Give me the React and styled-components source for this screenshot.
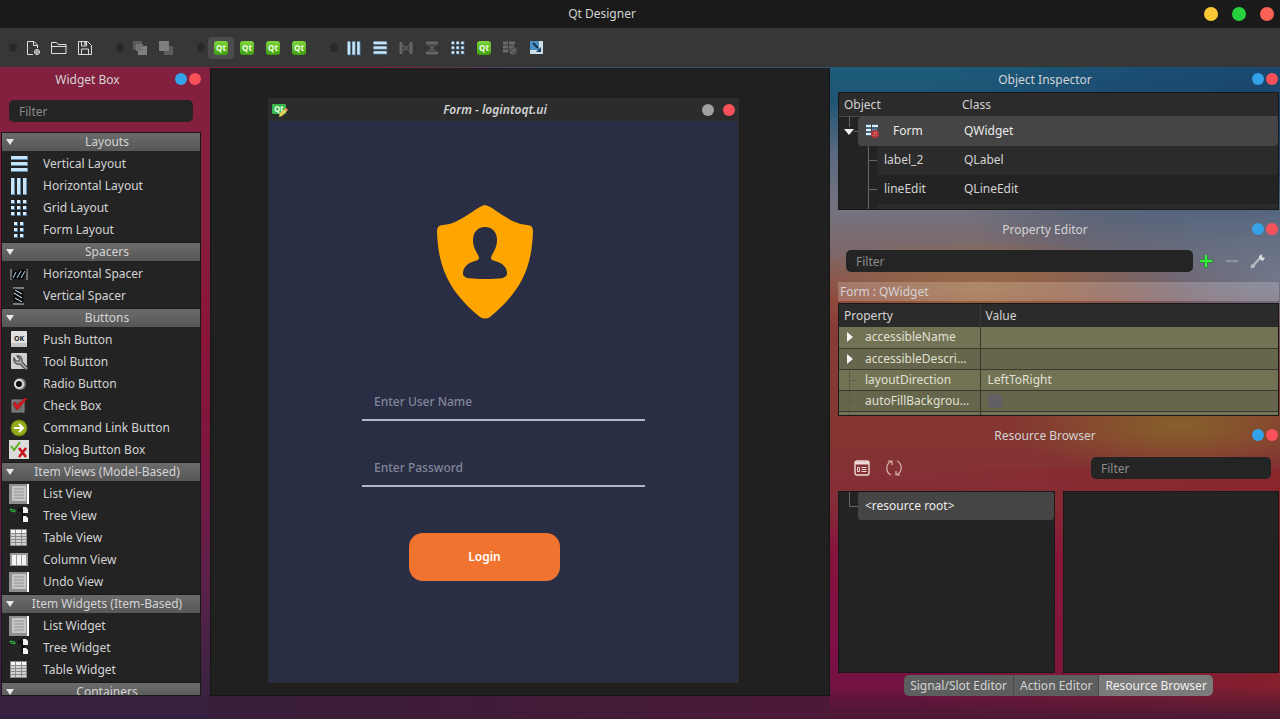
import { useState } from "react";
import styled, { createGlobalStyle, css } from "styled-components";

const theme = {
  text: "#d3d3d3",
  dim: "#8b8b8b",
  base: "#232323",
  alt: "#2b2b2b",
  selected: "#454545",
  blue: "#33a2e8",
  red: "#f9515a",
};

const GlobalStyle = createGlobalStyle`
  * {
    box-sizing: border-box;
  }

  body {
    margin: 0;
    font-family: "Noto Sans", sans-serif;
    font-size: 12px;
    line-height: 18px;
    color: ${theme.text};
    background-color: #3a1d38;
  }

  button,
  input {
    font: inherit;
    color: inherit;
    border: 0;
    margin: 0;
    padding: 0;
    background: none;
  }

  h1, h2, h3, ul {
    margin: 0;
    padding: 0;
    font-size: inherit;
    font-weight: 400;
    list-style: none;
  }

  svg {
    display: block;
    flex: none;
  }
`;

const Screen = styled.div`
  display: flex;
  flex-direction: column;
  height: 100vh;
  overflow: hidden;
`;

const TitleBar = styled.header`
  display: flex;
  align-items: center;
  height: 28px;
  flex: none;
  padding-right: 6px;
  background-color: #1a1a1a;
`;

const Title = styled.h1`
  flex: 1;
  text-align: center;
`;

const Dots = styled.div`
  display: flex;
  flex: none;
  gap: ${(props) => props.$gap}px;
`;

const Dot = styled.button`
  width: ${(props) => props.$size}px;
  height: ${(props) => props.$size}px;
  border-radius: 50%;
  background-color: ${(props) => props.$color};
`;

const ToolBar = styled.nav`
  display: flex;
  align-items: center;
  height: 39px;
  flex: none;
  background-color: #373737;
`;

const ToolGroup = styled.div`
  display: flex;
  align-items: center;
  padding-left: 18px;

  &:first-child {
    padding-left: 9px;
  }
`;

const Handle = styled.span`
  width: 8px;
  height: 9px;
  margin-right: 3px;
  border-radius: 50%;
  background-color: #292929;
`;

const ToolButton = styled.button`
  display: grid;
  place-items: center;
  width: 26px;
  height: 22px;
  border-radius: 4px;
  background-color: ${(props) => (props.$active ? "#4c4c4c" : "transparent")};
`;

const QtBadge = styled.span`
  display: grid;
  place-items: center;
  width: 14px;
  height: 14px;
  border-radius: 3px;
  font-size: 8px;
  line-height: 12px;
  font-weight: 700;
  color: #f1ffe4;
  background: linear-gradient(#7fd63c, #3f9d10);
`;

const Workspace = styled.div`
  flex: 1;
  min-height: 0;
  display: grid;
  grid-template-columns: 210px 1fr 450px;
  background:
    linear-gradient(90deg, #84203f 30%, #2a5673 45%, #1e5574) 0 0 / 100% 2px no-repeat,
    linear-gradient(90deg, #35213f, #3b1d38 25%, #4a1a38 60%, #5b1533);
`;

const LeftDock = styled.aside`
  display: flex;
  flex-direction: column;
  min-height: 0;
  padding-bottom: 23px;
  background: linear-gradient(
    #84203f,
    #84203d 20%,
    #8a1538 42%,
    #7a1842 62%,
    #55224a 82%,
    #3c2342 94%,
    #34203e
  );
`;

const RightDocks = styled.aside`
  display: flex;
  flex-direction: column;
  min-height: 0;
  padding: 0 1px 23px 8px;
  background:
    radial-gradient(170px 50px at 350px 358px, #86612a, rgba(134, 97, 42, 0)),
    radial-gradient(210px 50px at 150px 222px, rgba(158, 112, 66, 0.9), rgba(158, 112, 66, 0)),
    radial-gradient(250px 110px at 100% 210px, rgba(112, 124, 144, 0.9), rgba(112, 124, 144, 0)),
    radial-gradient(360px 200px at 100% 60px, rgba(26, 64, 108, 0.9), rgba(26, 64, 108, 0)),
    linear-gradient(0deg, #4c1834, rgba(76, 24, 52, 0)) 0 100% / 100% 34px no-repeat,
    linear-gradient(90deg, rgba(138, 36, 40, 0) 20%, rgba(138, 36, 40, 0.8)) 0 100% / 100% 250px no-repeat,
    linear-gradient(
      #1c5c7a,
      #1e5574 5%,
      #5a6880 13%,
      #75747f 22%,
      #7d6668 29%,
      #8a3d38 36%,
      #843532 58%,
      #852c38 67%,
      #86123e 75%,
      #7c1046 90%,
      #6d143f
    );
`;

const Dock = styled.section`
  display: flex;
  flex-direction: column;
  flex: ${(props) => (props.$height ? `0 0 ${props.$height}px` : "1 1 0")};
  min-height: 0;
  padding-bottom: ${(props) => (props.$height ? "7px" : "0")};
`;

const DockTitle = styled.div`
  display: flex;
  align-items: center;
  height: 25px;
  flex: none;
  padding: 0 ${(props) => (props.$inset ? "9px" : "1px")} 2px 0;

  h2 {
    flex: 1;
    padding-top: 2px;
    text-align: center;
  }
`;

const FilterInput = styled.input`
  flex: 1;
  min-width: 0;
  height: 22px;
  padding: 0 10px;
  border-radius: 5px;
  background-color: #242424;

  &::placeholder {
    color: ${theme.dim};
    opacity: 1;
  }
`;

const FilterRow = styled.div`
  display: flex;
  flex: none;
  padding: 8px 17px 10px 9px;
`;

const WidgetTree = styled.div`
  flex: 1;
  min-height: 0;
  overflow: hidden;
  margin: 0 9px 0 1px;
  border: 1px solid #191919;
  border-width: 0 1px 1px;
  background-color: ${theme.base};
`;

const CategoryHeader = styled.button`
  display: flex;
  align-items: center;
  width: 100%;
  height: 19px;
  padding-left: 4px;
  border-top: 1px solid #191919;
  background: linear-gradient(#6b6b6b, #575757);

  span {
    flex: 1;
    text-align: center;
  }
`;

const CategoryList = styled.ul`
  padding: 2px 0 1px;
`;

const WidgetItem = styled.li`
  display: flex;
  align-items: center;
  gap: 14px;
  height: 22px;
  padding-left: 7px;
`;

const Canvas = styled.main`
  min-width: 0;
  min-height: 0;
  margin: 1px 0 23px;
  padding: 30px 57px 0;
  background-color: #202020;
  border: 1px solid #151515;
  border-width: 0 1px 1px;
`;

const FormWindow = styled.section`
  width: 471px;
  border: 1px solid #2d2d2d;
  background-color: #292e45;
`;

const FormTitleBar = styled.div`
  display: flex;
  align-items: center;
  height: 22px;
  padding: 0 3px 0 2px;
  background-color: #2c2c2c;

  h2 {
    flex: 1;
    text-align: center;
    font-style: italic;
    font-weight: 600;
  }
`;

const LoginForm = styled.form`
  display: flex;
  flex-direction: column;
  height: 561px;
  padding: 84px 93px 0;
  background-image: radial-gradient(#262b41 1px, transparent 1px);
  background-size: 10px 10px;
`;

/* The logo and the button share a centre line left of the fields. */
const Centered = styled.div`
  display: flex;
  justify-content: center;
  padding-right: 38px;
`;

const LoginInput = styled.input`
  height: 38px;
  margin-top: ${(props) => props.$top}px;
  padding: 0 12px;
  border-bottom: 2px solid #b3b6c4;
  font-weight: 500;

  &::placeholder {
    color: #82859a;
    opacity: 1;
  }
`;

const LoginButton = styled.button`
  width: 151px;
  height: 48px;
  margin-top: 46px;
  border-radius: 14px;
  background-color: #f07430;
  color: #fff;
  font-weight: 600;
`;

const TableFrame = styled.div`
  flex: 1;
  min-height: 0;
  overflow: hidden;
  border: 1px solid #191919;
  background-color: ${theme.base};
`;

const headCell = css`
  height: 23px;
  padding: 1px 4px 0 5px;
  text-align: left;
  font-weight: 400;
  background-color: ${theme.alt};
`;

const ObjectTable = styled.table`
  width: 100%;
  table-layout: fixed;
  border-collapse: collapse;

  th {
    ${headCell}
    border-bottom: 1px solid #4a4a4a;
  }

  th:first-child {
    width: 118px;
  }

  td {
    height: 29px;
    padding: 0 7px;
  }

  td:first-child {
    padding: 0;
  }
`;

const ObjectRow = styled.tr`
  height: 29px;
  color: ${(props) => (props.$selected ? "#ececec" : "inherit")};

  td:last-child,
  td:first-child > div > span {
    background-color: ${(props) =>
      props.$selected ? theme.selected : props.$alt ? theme.alt : "transparent"};
  }

  td:last-child {
    border-radius: ${(props) => (props.$selected ? "0 4px 4px 0" : "0")};
  }
`;

const TreeCell = styled.div`
  display: flex;
  height: 29px;
`;

const TreeLabel = styled.span`
  flex: 1;
  display: flex;
  align-items: center;
  gap: ${(props) => (props.$selected ? "13px" : "0")};
  padding-left: 7px;
  border-radius: ${(props) => (props.$selected ? "4px 0 0 4px" : "0")};
`;

const EditorTools = styled.div`
  display: flex;
  align-items: center;
  padding: 8px 8px 10px;
`;

const FormLabel = styled.p`
  margin: 0 0 2px;
  height: 19px;
  padding: 1px 2px 0;
  background-color: rgba(255, 255, 255, 0.2);
`;

const PropertyTable = styled.table`
  width: 100%;
  table-layout: fixed;
  border-collapse: collapse;

  th {
    ${headCell}
  }

  th:first-child {
    width: 141px;
    border-right: 1px solid #3a3a3a;
  }

  td {
    height: 21px;
    padding: 0 7px;
    border-bottom: 1px solid #3a3a2c;
  }

  td:first-child {
    padding: 0;
    border-right: 1px solid #3a3a2c;
  }
`;

const PropertyRow = styled.tr`
  color: #e0e0d4;
  background-color: ${(props) => (props.$odd ? "#65664b" : "#727355")};
`;

const PropertyName = styled.div`
  display: flex;
  align-items: center;
  height: 20px;

  span {
    padding-right: 6px;
    overflow: hidden;
    text-overflow: ellipsis;
    white-space: nowrap;
  }
`;

const CheckBox = styled.input`
  appearance: none;
  display: block;
  width: 14px;
  height: 14px;
  border-radius: 2px;
  background-color: #626064;
`;

const ResourceTools = styled.div`
  display: flex;
  align-items: center;
  justify-content: space-between;
  padding: 9px 8px 12px;
`;

const ResourceButtons = styled.div`
  display: flex;
`;

const ResourceButton = styled.button`
  display: grid;
  place-items: center;
  width: 32px;
  height: 22px;
`;

const ResourceFilter = styled.div`
  display: flex;
  width: 180px;
`;

const Panes = styled.div`
  flex: 1;
  min-height: 0;
  display: grid;
  grid-template-columns: 217px 1fr;
  gap: 8px;
`;

const Pane = styled.div`
  border: 1px solid #191919;
  background-color: ${theme.base};
`;

const ResourceRoot = styled.div`
  display: flex;
  height: 28px;

  span {
    flex: 1;
    padding: 5px 7px;
    border-radius: 3px;
    color: #ececec;
    background-color: ${theme.selected};
  }
`;

const Tabs = styled.div`
  display: flex;
  justify-content: center;
  padding-top: 2px;
`;

const Tab = styled.button`
  height: 21px;
  padding: 1px 6px 0;
  border-right: 1px solid #4a4a4a;
  color: ${(props) => (props.$active ? "#f0f0f0" : theme.text)};
  background-color: ${(props) => (props.$active ? "#7b7b7b" : "#5d5f5f")};

  &:first-child {
    border-radius: 5px 0 0 5px;
  }

  &:last-child {
    border-right: 0;
    border-radius: 0 5px 5px 0;
  }
`;

function Svg({ size = 20, box = 20, children }) {
  return (
    <svg width={size} height={size} viewBox={`0 0 ${box} ${box}`} fill="none" aria-hidden="true">
      {children}
    </svg>
  );
}

/* Bars, grids */

const bars = [2, 8, 14];

function RowsIcon({ size }) {
  return (
    <Svg size={size}>
      {bars.map((y) => (
        <g key={y}>
          <rect x="2" y={y} width="17" height="4" fill="#5b8fb8" />
          <rect x="2" y={y} width="16" height="3" fill="#c9e4f6" />
        </g>
      ))}
    </Svg>
  );
}

function ColumnsIcon({ size }) {
  return (
    <Svg size={size}>
      {bars.map((x) => (
        <g key={x}>
          <rect x={x} y="2" width="4" height="17" fill="#5b8fb8" />
          <rect x={x} y="2" width="3" height="16" fill="#c9e4f6" />
        </g>
      ))}
    </Svg>
  );
}

function GridIcon({ size, columns = bars }) {
  return (
    <Svg size={size}>
      {columns.map((x) =>
        bars.map((y) => (
          <g key={`${x}-${y}`}>
            <rect x={x} y={y} width="4" height="4" fill="#4879a5" />
            <rect x={x} y={y} width="3" height="3" fill="#dcecf8" />
          </g>
        ))
      )}
    </Svg>
  );
}

function FormGridIcon() {
  return <GridIcon columns={[5, 11]} />;
}

function HSpacerIcon() {
  return (
    <Svg>
      <path d="M2 5v11M18 5v11" stroke="#8b8b8b" strokeWidth="1.4" />
      <path d="M4 15l3-8M8 15l4-9M12 15l4-9" stroke="#050505" strokeWidth="4" />
      <path d="M4 14l3-6M8 14l4-7M12 14l4-7" stroke="#9cc0d4" strokeWidth="1.1" />
    </Svg>
  );
}

function VSpacerIcon() {
  return (
    <Svg>
      <path d="M4 2h11M4 18h11" stroke="#9a9a9a" strokeWidth="1.4" />
      <path d="M5 4l9 4M5 8l9 4M5 12l9 4" stroke="#050505" strokeWidth="4" />
      <path d="M6 4l7 4M5 7l8 5M6 12l7 4" stroke="#b9d0dc" strokeWidth="1.1" />
    </Svg>
  );
}

/* Buttons */

function PushIcon() {
  return (
    <Svg>
      <rect x="2" y="1" width="16" height="16" rx="1" fill="#e2e2e2" />
      <rect x="2" y="13" width="16" height="4" fill="#c4c4c4" />
      <text x="10" y="11" textAnchor="middle" fontSize="7" fontWeight="700" fill="#222">
        OK
      </text>
    </Svg>
  );
}

function ToolIcon() {
  return (
    <Svg>
      <rect x="2" y="1" width="16" height="16" rx="1" fill="#cfcfcf" />
      <path
        d="M5 6C4 10 7 13 11 12L17 18L19 16L13 10C14 6 11 3 8 4L11 7L10 9L7 9Z"
        fill="#b4b4b4"
        stroke="#4a4a4a"
        strokeWidth="1.2"
      />
    </Svg>
  );
}

function RadioIcon() {
  return (
    <Svg>
      <circle cx="11" cy="10" r="6" fill="#7c7c7c" />
      <circle cx="10" cy="10" r="5" fill="#dcdcdc" />
      <circle cx="10" cy="10" r="3" fill="#0c0c0c" />
    </Svg>
  );
}

function CheckIcon() {
  return (
    <Svg>
      <rect x="3" y="4" width="12" height="12" fill="#6e6e6e" stroke="#8e8e8e" />
      <path d="M4 8l4 6L18 3l-2-1-8 7-2-3z" fill="#d41c22" stroke="#8d0d12" strokeWidth=".6" />
    </Svg>
  );
}

function LinkIcon() {
  return (
    <Svg>
      <circle cx="10" cy="10" r="8" fill="#93ad1c" stroke="#62760f" />
      <path d="M5 10h9M10 6l4 4-4 4" stroke="#fff" strokeWidth="2" />
    </Svg>
  );
}

function DialogIcon() {
  return (
    <Svg>
      <rect x="0" y="0" width="20" height="19" fill="#dcdcdc" />
      <path d="M2 6l3 4 6-8" stroke="#58ad1e" strokeWidth="2" />
      <path d="M10 8l7 9M17 8l-7 9" stroke="#c4151d" strokeWidth="2.6" />
    </Svg>
  );
}

/* Item views */

function ListIcon() {
  return (
    <Svg>
      <rect x="0" y="0" width="20" height="20" fill="#8f8f8f" />
      <rect x="3" y="2" width="14" height="15" fill="#c6c6c6" />
      <path d="M5 5h10M5 8h10M5 11h10M5 14h10" stroke="#929292" />
      <path d="M19 0v20" stroke="#fff" strokeWidth="2" />
    </Svg>
  );
}

function TreeIcon() {
  return (
    <Svg>
      <path d="M1 3l5 1v2l-4-1z" fill="#0d3a13" stroke="#38b549" />
      <path d="M9 4h5v10h5" stroke="#0c0c0c" strokeWidth="3" />
      <path d="M14 1h3l2 2v4h-5zM14 10h3l2 2v4h-5z" fill="#f2f2f2" />
    </Svg>
  );
}

function TableIcon() {
  return (
    <Svg>
      <rect x="1" y="1" width="17" height="17" fill="#8a8a8a" />
      <path d="M2 2h4v3H2zM7 2h5v3H7zM13 2h4v3h-4z" fill="#f6f6f6" />
      <path
        d="M2 6h4v2H2zM2 9h4v2H2zM2 12h4v2H2zM2 15h4v2H2zM7 6h5v2H7zM7 9h5v2H7zM7 12h5v2H7zM7 15h5v2H7zM13 6h4v2h-4zM13 9h4v2h-4zM13 12h4v2h-4zM13 15h4v2h-4z"
        fill="#d2d2d2"
      />
    </Svg>
  );
}

function ColumnViewIcon() {
  return (
    <Svg>
      <rect x="1" y="3" width="18" height="13" fill="#9a9a9a" />
      <path d="M3 5h4v10H3zM8 5h4v10H8zM13 5h4v10h-4z" fill="#f3f3f3" />
    </Svg>
  );
}

/* Main toolbar */

function NewIcon() {
  return (
    <Svg size={16} box={16}>
      <path d="M8 14.5H2.5v-13H9l3.5 3.5v3M8.5 2v3.5H12" stroke="#dedede" />
      <circle cx="12" cy="12" r="2.5" stroke="#dedede" />
      <path d="M12 9v6M9 12h6" stroke="#dedede" />
    </Svg>
  );
}

function OpenIcon() {
  return (
    <Svg size={16} box={16}>
      <path d="M.5 13.5V2.5h5l1.5 2h8v9zM.5 6.5h15" stroke="#dedede" />
    </Svg>
  );
}

function SaveIcon() {
  return (
    <Svg size={16} box={16}>
      <path d="M1.5 1.5h9l4 4v9h-13zM4.5 14v-5h7v5M4.5 2v4h5V2" stroke="#dedede" />
      <path d="M8 2v3" stroke="#dedede" strokeWidth="1.5" />
    </Svg>
  );
}

function LowerIcon() {
  return (
    <Svg size={16} box={16}>
      <rect x="1" y="1" width="9" height="9" fill="#5c5c5c" />
      <rect x="6" y="6" width="9" height="9" fill="#808080" />
      <rect x="4" y="4" width="7" height="7" fill="#747474" />
    </Svg>
  );
}

function RaiseIcon() {
  return (
    <Svg size={16} box={16}>
      <rect x="6" y="6" width="9" height="9" fill="#5c5c5c" />
      <rect x="1" y="1" width="10" height="10" fill="#7e7e7e" />
    </Svg>
  );
}

function HSplitIcon() {
  return (
    <Svg size={16} box={16}>
      <path d="M3 2v12M13 2v12" stroke="#666" strokeWidth="3" />
      <path d="M5 5l3 3-3 3M11 5L8 8l3 3" stroke="#5c5c5c" strokeWidth="1.5" />
    </Svg>
  );
}

function VSplitIcon() {
  return (
    <Svg size={16} box={16}>
      <path d="M2 3h12M2 13h12" stroke="#666" strokeWidth="3" />
      <path d="M5 5l3 3 3-3M5 11l3-3 3 3" stroke="#5c5c5c" strokeWidth="1.5" />
    </Svg>
  );
}

function BreakIcon() {
  return (
    <Svg size={16} box={16}>
      <path d="M1 3h5M7 3h6M1 7h5M7 7h5M1 11h5" stroke="#6a6a6a" strokeWidth="3" />
      <circle cx="11" cy="11" r="4" fill="#555" />
      <path d="M9 13l4-4" stroke="#777" />
    </Svg>
  );
}

function AdjustIcon() {
  return (
    <Svg size={16} box={16}>
      <rect x="2" y="1" width="13" height="13" fill="#cfdde7" />
      <rect x="2" y="1" width="9" height="9" fill="#4a90c4" />
      <path d="M5 3l5 5" stroke="#12324e" strokeWidth="2" />
      <path d="M13 7v5H8z" fill="#1b4468" />
    </Svg>
  );
}

function FormIcon() {
  return (
    <Svg size={15} box={15}>
      <path d="M1 2h5M7 2h6M1 6h5M7 6h5M1 10h5" stroke="#4d87b5" strokeWidth="3" />
      <path d="M1 2h5M7 2h6M1 6h5M1 10h5" stroke="#dcecf7" strokeWidth="2" />
      <circle cx="10" cy="10" r="4" fill="#b53638" />
      <path d="M8 12l4-4M9 8l1 1M11 11l1 1" stroke="#d98585" />
    </Svg>
  );
}

function FormWindowIcon() {
  return (
    <Svg size={17} box={17}>
      <path d="M1 3q0-1 1-1h12l1 1v9h-4l-1 2-2-2H2q-1 0-1-1z" fill="#39b54a" />
      <text x="3" y="10" fontSize="8" fontWeight="700" fill="#e8ffe8">
        Qt
      </text>
      <path d="M8 15l1-4 6-5 2 2-6 6z" fill="#e6cf5a" />
      <path d="M14 7l1-1 2 2-1 1z" fill="#d9525a" />
    </Svg>
  );
}

function ShieldLogo() {
  return (
    <svg width="96" height="114" viewBox="0 0 96 114" role="img" aria-label="User shield">
      <path
        d="M48 0C53 0 66 12 78 17Q84 20 90 20Q96 20 96 26C95 65 82 88 53 112Q48 115 43 112C14 88 1 65 0 26Q0 20 6 20Q12 20 18 17C30 12 43 0 48 0Z"
        fill="#ffa500"
      />
      <path
        d="M48 22C56 22 60 28 60 35C60 42 57 46 55 50C53 54 54 55 58 56C66 58 70 63 70 68C70 73 66 74 48 74C30 74 26 73 26 68C26 63 30 58 38 56C42 55 43 54 41 50C39 46 36 42 36 35C36 28 40 22 48 22Z"
        fill="#292e45"
      />
    </svg>
  );
}

function DownArrow() {
  return (
    <Svg size={8} box={8}>
      <path d="M0 1h8L4 7z" fill="#e8e8e8" />
    </Svg>
  );
}

function PlusIcon() {
  return (
    <Svg size={14} box={14}>
      <path d="M7 1v13M1 7h13" stroke="#12951a" strokeWidth="3" />
      <path d="M7 1v12M1 7h12" stroke="#35ee3a" strokeWidth="2" />
    </Svg>
  );
}

function MinusIcon() {
  return (
    <Svg size={14} box={14}>
      <path d="M1 7h12" stroke="#8f949b" strokeWidth="2" />
    </Svg>
  );
}

function WrenchIcon() {
  return (
    <Svg size={16} box={16}>
      <path d="M2 14l8-9" stroke="#b9bcc2" strokeWidth="2" />
      <path d="M9 6V3l3-2v3l3 1-2 3z" fill="#d8dade" />
      <path d="M1 15l1-4M2 15l3-2" stroke="#c9ccd1" />
    </Svg>
  );
}

function EditResourcesIcon() {
  return (
    <Svg size={16} box={16}>
      <rect x="1" y="1" width="14" height="14" rx="2" stroke="#eed9d6" strokeWidth="1.4" />
      <path d="M1 3h14" stroke="#eed9d6" strokeWidth="3" />
      <path d="M3.5 7.5h2v4h-2zM7.5 7.5h5M7.5 9.5h5M7.5 11.5h5" stroke="#eed9d6" />
    </Svg>
  );
}

function ReloadIcon() {
  return (
    <Svg size={18} box={18}>
      <path
        d="M6 16A7.5 7.5 0 0 1 6 2.5M3 2h4v4M12 2A7.5 7.5 0 0 1 12 15.5M15 16h-4v-4"
        stroke="#dcb5b0"
        strokeWidth="1.2"
      />
    </Svg>
  );
}

/* Branch lines drawn in the gutter of the tree views */
function RootBranch() {
  return (
    <svg width="19" height="29" aria-hidden="true">
      <path d="M10.5 0v10M15 14.5h4" stroke="#666" />
      <path d="M5 12h10l-5 6z" fill="#f0f0f0" />
    </svg>
  );
}

function ChildBranch() {
  return (
    <svg width="38" height="29" aria-hidden="true">
      <path d="M29.5 0v29M29 14.5h9" stroke="#666" />
    </svg>
  );
}

function PropertyBranch({ expandable }) {
  return (
    <svg width="26" height="20" aria-hidden="true">
      {expandable ? (
        <path d="M8 5l6 5-6 5z" fill="#f4f4f4" />
      ) : (
        <path d="M10.5 0v20M10 10.5h8" stroke="#5d5e44" />
      )}
    </svg>
  );
}

const categories = [
  {
    name: "Layouts",
    items: [
      ["Vertical Layout", RowsIcon],
      ["Horizontal Layout", ColumnsIcon],
      ["Grid Layout", GridIcon],
      ["Form Layout", FormGridIcon],
    ],
  },
  {
    name: "Spacers",
    items: [
      ["Horizontal Spacer", HSpacerIcon],
      ["Vertical Spacer", VSpacerIcon],
    ],
  },
  {
    name: "Buttons",
    items: [
      ["Push Button", PushIcon],
      ["Tool Button", ToolIcon],
      ["Radio Button", RadioIcon],
      ["Check Box", CheckIcon],
      ["Command Link Button", LinkIcon],
      ["Dialog Button Box", DialogIcon],
    ],
  },
  {
    name: "Item Views (Model-Based)",
    items: [
      ["List View", ListIcon],
      ["Tree View", TreeIcon],
      ["Table View", TableIcon],
      ["Column View", ColumnViewIcon],
      ["Undo View", ListIcon],
    ],
  },
  {
    name: "Item Widgets (Item-Based)",
    items: [
      ["List Widget", ListIcon],
      ["Tree Widget", TreeIcon],
      ["Table Widget", TableIcon],
    ],
  },
  { name: "Containers", items: [] },
];

const QtIcon = () => <QtBadge>Qt</QtBadge>;

const toolGroups = [
  [
    ["New", NewIcon],
    ["Open", OpenIcon],
    ["Save", SaveIcon],
  ],
  [
    ["Send to Back", LowerIcon],
    ["Bring to Front", RaiseIcon],
  ],
  [
    ["Edit Widgets", QtIcon],
    ["Edit Signals/Slots", QtIcon],
    ["Edit Buddies", QtIcon],
    ["Edit Tab Order", QtIcon],
  ],
  [
    ["Lay Out Horizontally", ColumnsIcon],
    ["Lay Out Vertically", RowsIcon],
    ["Horizontal Splitter", HSplitIcon],
    ["Vertical Splitter", VSplitIcon],
    ["Lay Out in a Grid", GridIcon],
    ["Lay Out in a Form", QtIcon],
    ["Break Layout", BreakIcon],
    ["Adjust Size", AdjustIcon],
  ],
];

const properties = [
  { name: "accessibleName", expandable: true },
  { name: "accessibleDescription", expandable: true },
  { name: "layoutDirection", value: "LeftToRight" },
  { name: "autoFillBackground", check: true },
  { name: "styleSheet" },
];

const tabs = ["Signal/Slot Editor", "Action Editor", "Resource Browser"];

function DockHeader({ title, inset }) {
  return (
    <DockTitle $inset={inset}>
      <h2>{title}</h2>
      <Dots $gap={2}>
        <Dot $size={12} $color={theme.blue} aria-label={`Float ${title}`} />
        <Dot $size={12} $color={theme.red} aria-label={`Close ${title}`} />
      </Dots>
    </DockTitle>
  );
}

function WidgetBox() {
  return (
    <LeftDock>
      <DockHeader title="Widget Box" inset />
      <FilterRow>
        <FilterInput placeholder="Filter" aria-label="Filter widgets" />
      </FilterRow>
      <WidgetTree>
        {categories.map(({ name, items }) => (
          <section key={name}>
            <CategoryHeader>
              <DownArrow />
              <span>{name}</span>
            </CategoryHeader>
            <CategoryList>
              {items.map(([label, Icon]) => (
                <WidgetItem key={label}>
                  <Icon />
                  {label}
                </WidgetItem>
              ))}
            </CategoryList>
          </section>
        ))}
      </WidgetTree>
    </LeftDock>
  );
}

function FormPreview() {
  return (
    <Canvas>
      <FormWindow>
        <FormTitleBar>
          <FormWindowIcon />
          <h2>Form - logintoqt.ui</h2>
          <Dots $gap={9}>
            <Dot $size={12} $color="#a0a0a0" aria-label="Minimize form" />
            <Dot $size={12} $color={theme.red} aria-label="Close form" />
          </Dots>
        </FormTitleBar>
        <LoginForm onSubmit={(e) => e.preventDefault()}>
          <Centered>
            <ShieldLogo />
          </Centered>
          <LoginInput $top={64} placeholder="Enter User Name" aria-label="User name" />
          <LoginInput $top={28} type="password" placeholder="Enter Password" aria-label="Password" />
          <Centered>
            <LoginButton>Login</LoginButton>
          </Centered>
        </LoginForm>
      </FormWindow>
    </Canvas>
  );
}

function ObjectInspector() {
  return (
    <Dock $height={150}>
      <DockHeader title="Object Inspector" />
      <TableFrame>
        <ObjectTable>
          <thead>
            <tr>
              <th>Object</th>
              <th>Class</th>
            </tr>
          </thead>
          <tbody>
            <ObjectRow $selected>
              <td>
                <TreeCell>
                  <RootBranch />
                  <TreeLabel $selected>
                    <FormIcon />
                    Form
                  </TreeLabel>
                </TreeCell>
              </td>
              <td>QWidget</td>
            </ObjectRow>
            <ObjectRow $alt>
              <td>
                <TreeCell>
                  <ChildBranch />
                  <TreeLabel>label_2</TreeLabel>
                </TreeCell>
              </td>
              <td>QLabel</td>
            </ObjectRow>
            <ObjectRow>
              <td>
                <TreeCell>
                  <ChildBranch />
                  <TreeLabel>lineEdit</TreeLabel>
                </TreeCell>
              </td>
              <td>QLineEdit</td>
            </ObjectRow>
            <ObjectRow $alt>
              <td>
                <TreeCell>
                  <ChildBranch />
                  <TreeLabel />
                </TreeCell>
              </td>
              <td />
            </ObjectRow>
          </tbody>
        </ObjectTable>
      </TableFrame>
    </Dock>
  );
}

function PropertyEditor() {
  return (
    <Dock $height={206}>
      <DockHeader title="Property Editor" />
      <EditorTools>
        <FilterInput placeholder="Filter" aria-label="Filter properties" />
        <ToolButton aria-label="Add property">
          <PlusIcon />
        </ToolButton>
        <ToolButton aria-label="Remove property">
          <MinusIcon />
        </ToolButton>
        <ToolButton aria-label="Configure">
          <WrenchIcon />
        </ToolButton>
      </EditorTools>
      <FormLabel>Form : QWidget</FormLabel>
      <TableFrame>
        <PropertyTable>
          <thead>
            <tr>
              <th>Property</th>
              <th>Value</th>
            </tr>
          </thead>
          <tbody>
            {properties.map(({ name, value, expandable, check }, i) => (
              <PropertyRow key={name} $odd={i % 2 === 1}>
                <td>
                  <PropertyName>
                    <PropertyBranch expandable={expandable} />
                    <span>{name}</span>
                  </PropertyName>
                </td>
                <td>{check ? <CheckBox type="checkbox" aria-label={name} /> : value}</td>
              </PropertyRow>
            ))}
          </tbody>
        </PropertyTable>
      </TableFrame>
    </Dock>
  );
}

function ResourceBrowser() {
  const [active, setActive] = useState("Resource Browser");

  return (
    <Dock>
      <DockHeader title="Resource Browser" />
      <ResourceTools>
        <ResourceButtons>
          <ResourceButton aria-label="Edit resources">
            <EditResourcesIcon />
          </ResourceButton>
          <ResourceButton aria-label="Reload">
            <ReloadIcon />
          </ResourceButton>
        </ResourceButtons>
        <ResourceFilter>
          <FilterInput placeholder="Filter" aria-label="Filter resources" />
        </ResourceFilter>
      </ResourceTools>
      <Panes>
        <Pane>
          <ResourceRoot>
            <svg width="19" height="28" aria-hidden="true">
              <path d="M10.5 0v14.5h9" fill="none" stroke="#666" />
            </svg>
            <span>&lt;resource root&gt;</span>
          </ResourceRoot>
        </Pane>
        <Pane />
      </Panes>
      <Tabs>
        {tabs.map((tab) => (
          <Tab key={tab} $active={tab === active} onClick={() => setActive(tab)}>
            {tab}
          </Tab>
        ))}
      </Tabs>
    </Dock>
  );
}

function App() {
  return (
    <Screen>
      <GlobalStyle />
      <TitleBar>
        <Title>Qt Designer</Title>
        <Dots $gap={14}>
          <Dot $size={14} $color="#fcc934" aria-label="Minimize" />
          <Dot $size={14} $color="#28d03c" aria-label="Maximize" />
          <Dot $size={14} $color="#fb6155" aria-label="Close" />
        </Dots>
      </TitleBar>
      <ToolBar>
        {toolGroups.map((group, i) => (
          <ToolGroup key={i}>
            <Handle />
            {group.map(([label, Icon]) => (
              <ToolButton key={label} $active={label === "Edit Widgets"} aria-label={label}>
                <Icon size={16} />
              </ToolButton>
            ))}
          </ToolGroup>
        ))}
      </ToolBar>
      <Workspace>
        <WidgetBox />
        <FormPreview />
        <RightDocks>
          <ObjectInspector />
          <PropertyEditor />
          <ResourceBrowser />
        </RightDocks>
      </Workspace>
    </Screen>
  );
}

export default App;
